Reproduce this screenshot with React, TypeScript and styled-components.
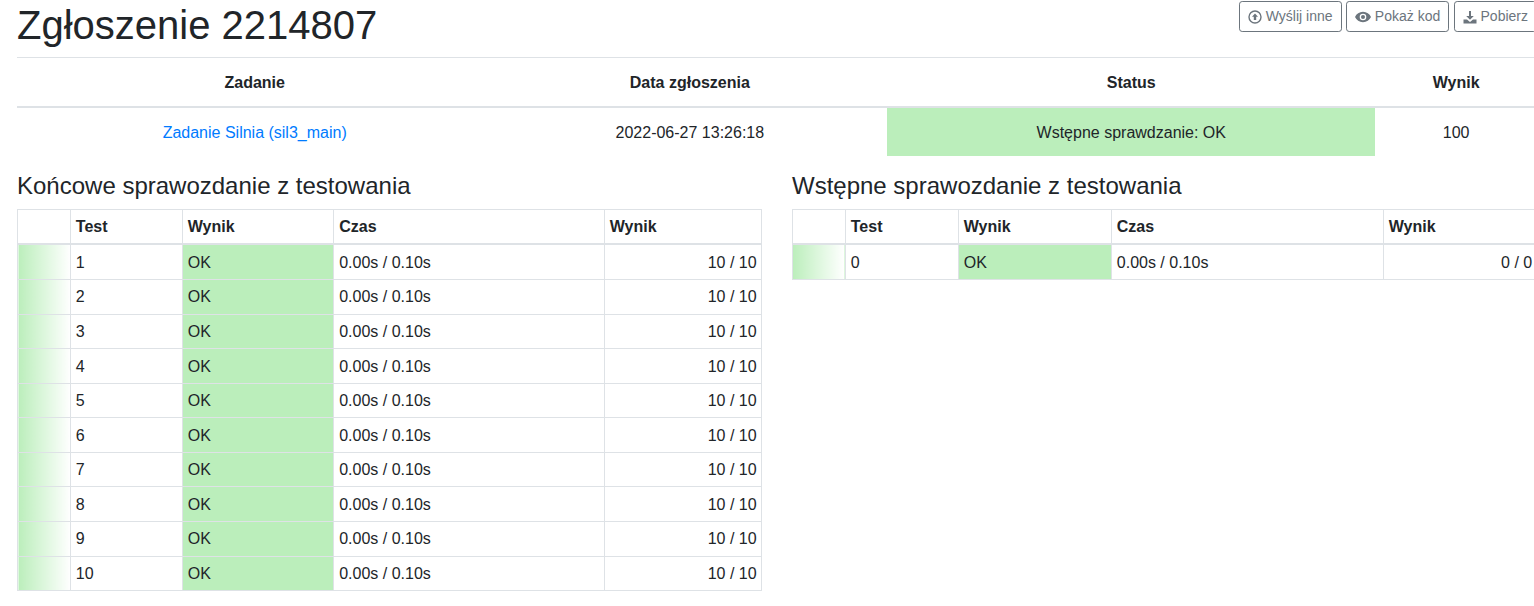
import React, { FC } from 'react';
import styled, { createGlobalStyle } from 'styled-components';

const GlobalStyle = createGlobalStyle`
  html, body {
    margin: 0;
    overflow: hidden;
    background: #fff;
  }
  body {
    font-family: "Liberation Sans", Arial, sans-serif;
    font-size: 16px;
    line-height: 1.5;
    color: #212529;
  }
`;

const Page = styled.div`
  width: 1520px;
  margin-left: 17px;
`;

const Header = styled.div`
  display: flex;
  justify-content: space-between;
  align-items: flex-start;
  height: 57px;
`;

const Title = styled.h1`
  margin: 1px 0 0;
  font-size: 40px;
  font-weight: 500;
  line-height: 48px;
`;

const Actions = styled.div`
  display: flex;
  gap: 4.3px;
  padding-top: 1px;
`;

const Button = styled.a`
  display: flex;
  align-items: center;
  gap: 4px;
  height: 31px;
  box-sizing: border-box;
  padding: 0 8px;
  border: 1px solid #6c757d;
  border-radius: 3.2px;
  color: #6c757d;
  font-size: 14px;
`;

const Table = styled.table`
  width: 100%;
  table-layout: fixed;
  border-collapse: collapse;
`;

const SummaryHead = styled.th`
  padding: 13px 12px 11px;
  text-align: center;
  font-weight: 700;
  border-top: 1px solid #dee2e6;
  border-bottom: 2px solid #dee2e6;
`;

const SummaryCell = styled.td<{ $ok?: boolean }>`
  padding: 13px 12px 11px;
  text-align: center;
  background: ${(props) => (props.$ok ? '#bbeebb' : 'transparent')};
`;

const TaskLink = styled.a`
  color: #007bff;
`;

const Reports = styled.div`
  display: grid;
  grid-template-columns: 744.4px 745px;
  gap: 30.6px;
  margin-top: 16px;
`;

const ReportTitle = styled.h4`
  margin: 0 0 8px;
  font-size: 24px;
  font-weight: 500;
  line-height: 28.8px;
`;

const HeadCell = styled.th`
  padding: 4.8px;
  text-align: left;
  font-weight: 700;
  border: 1px solid #dee2e6;
  border-bottom-width: 2px;
`;

const Cell = styled.td<{ $right?: boolean; $ok?: boolean }>`
  padding: 5.4px 4.8px 4.2px;
  border: 1px solid #dee2e6;
  text-align: ${(props) => (props.$right ? 'right' : 'left')};
  background: ${(props) => (props.$ok ? '#bbeebb' : 'transparent')};
`;

const GradientCell = styled.td`
  padding: 4.8px;
  border: 1px solid #dee2e6;
  background: linear-gradient(to right, #bbeebb, #fff);
`;

const UploadIcon = () => (
  <svg width="14" height="14" viewBox="0 0 14 14">
    <circle cx="7" cy="7" r="6" fill="none" stroke="currentColor" strokeWidth="1.4" />
    <path d="M7 3.4 10 6.8H8.2V10H5.8V6.8H4z" fill="currentColor" />
  </svg>
);

const EyeIcon = () => (
  <svg width="16" height="14" viewBox="0 0 16 14">
    <path
      fillRule="evenodd"
      d="M8 1.800c3.600 0 6.600 2.200 8 5.200-1.400 3-4.400 5.200-8 5.200S1.400 10 0 7C1.400 4 4.400 1.800 8 1.800zM8 3.700A3.300 3.300 0 1 0 8 10.300 3.300 3.300 0 0 0 8 3.700z"
      fill="currentColor"
    />
    <circle cx="8" cy="7" r="2" fill="currentColor" />
  </svg>
);

const DownloadIcon = () => (
  <svg width="14" height="14" viewBox="0 0 14 14">
    <path d="M6 1H8V6H10.800L7 9.800 3.200 6H6z" fill="currentColor" />
    <path d="M0.500 9.500H4L7 12 10 9.500H13.500V13.500H0.500z" fill="currentColor" />
  </svg>
);

type TestRow = { id: number; score: string };

const COLS_LEFT = [53, 112, 151.4, 270.6, 157.4];
const COLS_RIGHT = [53, 113, 153, 272, 154];

const ReportTable: FC<{ title: string; cols: number[]; rows: TestRow[] }> = ({ title, cols, rows }) => (
  <div>
    <ReportTitle>{title}</ReportTitle>
    <Table>
      <colgroup>
        {cols.map((width, index) => (
          <col key={index} width={width} />
        ))}
      </colgroup>
      <thead>
        <tr>
          <HeadCell />
          <HeadCell>Test</HeadCell>
          <HeadCell>Wynik</HeadCell>
          <HeadCell>Czas</HeadCell>
          <HeadCell>Wynik</HeadCell>
        </tr>
      </thead>
      <tbody>
        {rows.map((row) => (
          <tr key={row.id}>
            <GradientCell />
            <Cell>{row.id}</Cell>
            <Cell $ok>OK</Cell>
            <Cell>0.00s / 0.10s</Cell>
            <Cell $right>{row.score}</Cell>
          </tr>
        ))}
      </tbody>
    </Table>
  </div>
);

const finalRows: TestRow[] = Array.from({ length: 10 }, (_, index) => ({
  id: index + 1,
  score: '10 / 10',
}));

export default function App() {
  return (
    <Page>
      <GlobalStyle />
      <Header>
        <Title>Zgłoszenie 2214807</Title>
        <Actions>
          <Button>
            <UploadIcon />
            Wyślij inne
          </Button>
          <Button>
            <EyeIcon />
            Pokaż kod
          </Button>
          <Button>
            <DownloadIcon />
            Pobierz
          </Button>
        </Actions>
      </Header>
      <Table>
        <colgroup>
          <col width={475.4} />
          <col width={394.9} />
          <col width={488} />
          <col width={161.7} />
        </colgroup>
        <thead>
          <tr>
            <SummaryHead>Zadanie</SummaryHead>
            <SummaryHead>Data zgłoszenia</SummaryHead>
            <SummaryHead>Status</SummaryHead>
            <SummaryHead>Wynik</SummaryHead>
          </tr>
        </thead>
        <tbody>
          <tr>
            <SummaryCell>
              <TaskLink>Zadanie Silnia (sil3_main)</TaskLink>
            </SummaryCell>
            <SummaryCell>2022-06-27 13:26:18</SummaryCell>
            <SummaryCell $ok>Wstępne sprawdzanie: OK</SummaryCell>
            <SummaryCell>100</SummaryCell>
          </tr>
        </tbody>
      </Table>
      <Reports>
        <ReportTable title="Końcowe sprawozdanie z testowania" cols={COLS_LEFT} rows={finalRows} />
        <ReportTable
          title="Wstępne sprawozdanie z testowania"
          cols={COLS_RIGHT}
          rows={[{ id: 0, score: '0 / 0' }]}
        />
      </Reports>
    </Page>
  );
}
